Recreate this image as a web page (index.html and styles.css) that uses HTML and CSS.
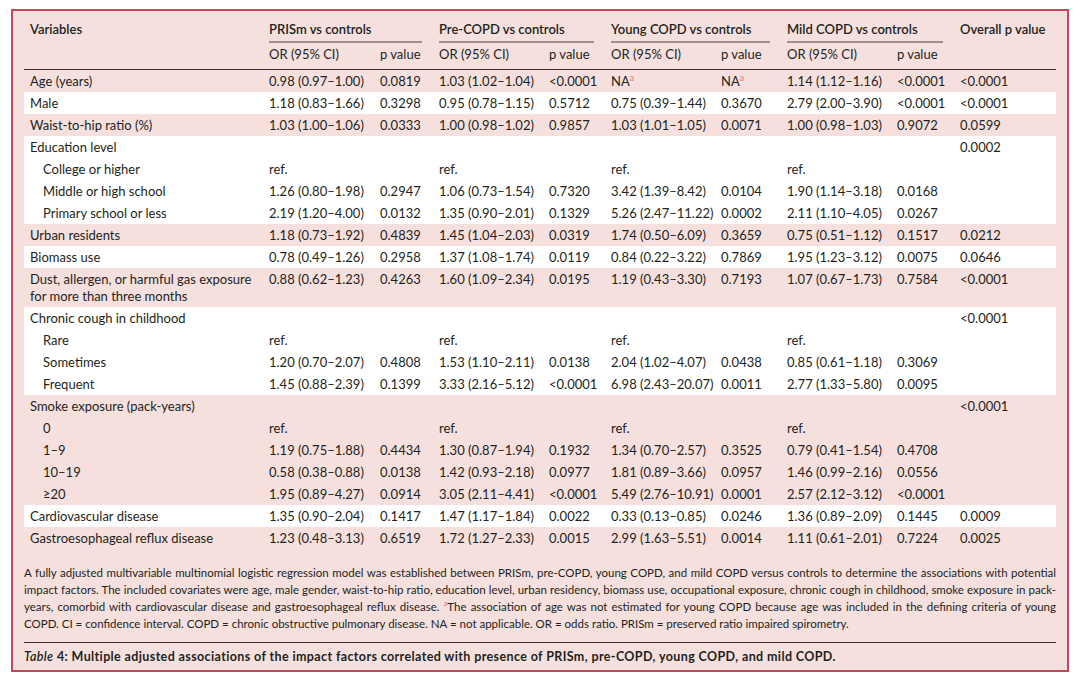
FILE: index.html
```html
<!DOCTYPE html>
<html>
<head>
<meta charset="utf-8">
<link rel="stylesheet" href="styles.css">
</head>
<body>
<div class="frame">
  <table class="tbl">
    <colgroup>
      <col class="c-var"><col class="c-or1"><col class="c-p1"><col class="c-or2"><col class="c-p2"><col class="c-or3"><col class="c-p3"><col class="c-or4"><col class="c-p4"><col class="c-all">
    </colgroup>
    <thead>
      <tr class="h1">
        <th rowspan="2" class="top">Variables</th>
        <th colspan="2" class="grp"><span>PRISm vs controls</span></th>
        <th colspan="2" class="grp"><span>Pre-COPD vs controls</span></th>
        <th colspan="2" class="grp"><span>Young COPD vs controls</span></th>
        <th colspan="2" class="grp"><span>Mild COPD vs controls</span></th>
        <th rowspan="2" class="top">Overall p value</th>
      </tr>
      <tr class="h2">
        <th>OR (95% CI)</th><th>p value</th>
        <th>OR (95% CI)</th><th>p value</th>
        <th>OR (95% CI)</th><th>p value</th>
        <th>OR (95% CI)</th><th>p value</th>
      </tr>
    </thead>
    <tbody>
      <tr><td>Age (years)</td><td>0.98 (0.97–1.00)</td><td>0.0819</td><td>1.03 (1.02–1.04)</td><td>&lt;0.0001</td><td>NA<sup>a</sup></td><td>NA<sup>a</sup></td><td>1.14 (1.12–1.16)</td><td>&lt;0.0001</td><td>&lt;0.0001</td></tr>
      <tr class="w"><td>Male</td><td>1.18 (0.83–1.66)</td><td>0.3298</td><td>0.95 (0.78–1.15)</td><td>0.5712</td><td>0.75 (0.39–1.44)</td><td>0.3670</td><td>2.79 (2.00–3.90)</td><td>&lt;0.0001</td><td>&lt;0.0001</td></tr>
      <tr><td>Waist-to-hip ratio (%)</td><td>1.03 (1.00–1.06)</td><td>0.0333</td><td>1.00 (0.98–1.02)</td><td>0.9857</td><td>1.03 (1.01–1.05)</td><td>0.0071</td><td>1.00 (0.98–1.03)</td><td>0.9072</td><td>0.0599</td></tr>
      <tr class="w"><td>Education level</td><td></td><td></td><td></td><td></td><td></td><td></td><td></td><td></td><td>0.0002</td></tr>
      <tr class="w"><td class="sub">College or higher</td><td>ref.</td><td></td><td>ref.</td><td></td><td>ref.</td><td></td><td>ref.</td><td></td><td></td></tr>
      <tr class="w"><td class="sub">Middle or high school</td><td>1.26 (0.80–1.98)</td><td>0.2947</td><td>1.06 (0.73–1.54)</td><td>0.7320</td><td>3.42 (1.39–8.42)</td><td>0.0104</td><td>1.90 (1.14–3.18)</td><td>0.0168</td><td></td></tr>
      <tr class="w"><td class="sub">Primary school or less</td><td>2.19 (1.20–4.00)</td><td>0.0132</td><td>1.35 (0.90–2.01)</td><td>0.1329</td><td>5.26 (2.47–11.22)</td><td>0.0002</td><td>2.11 (1.10–4.05)</td><td>0.0267</td><td></td></tr>
      <tr><td>Urban residents</td><td>1.18 (0.73–1.92)</td><td>0.4839</td><td>1.45 (1.04–2.03)</td><td>0.0319</td><td>1.74 (0.50–6.09)</td><td>0.3659</td><td>0.75 (0.51–1.12)</td><td>0.1517</td><td>0.0212</td></tr>
      <tr class="w"><td>Biomass use</td><td>0.78 (0.49–1.26)</td><td>0.2958</td><td>1.37 (1.08–1.74)</td><td>0.0119</td><td>0.84 (0.22–3.22)</td><td>0.7869</td><td>1.95 (1.23–3.12)</td><td>0.0075</td><td>0.0646</td></tr>
      <tr><td>Dust, allergen, or harmful gas exposure<br>for more than three months</td><td>0.88 (0.62–1.23)</td><td>0.4263</td><td>1.60 (1.09–2.34)</td><td>0.0195</td><td>1.19 (0.43–3.30)</td><td>0.7193</td><td>1.07 (0.67–1.73)</td><td>0.7584</td><td>&lt;0.0001</td></tr>
      <tr class="w"><td>Chronic cough in childhood</td><td></td><td></td><td></td><td></td><td></td><td></td><td></td><td></td><td>&lt;0.0001</td></tr>
      <tr class="w"><td class="sub">Rare</td><td>ref.</td><td></td><td>ref.</td><td></td><td>ref.</td><td></td><td>ref.</td><td></td><td></td></tr>
      <tr class="w"><td class="sub">Sometimes</td><td>1.20 (0.70–2.07)</td><td>0.4808</td><td>1.53 (1.10–2.11)</td><td>0.0138</td><td>2.04 (1.02–4.07)</td><td>0.0438</td><td>0.85 (0.61–1.18)</td><td>0.3069</td><td></td></tr>
      <tr class="w"><td class="sub">Frequent</td><td>1.45 (0.88–2.39)</td><td>0.1399</td><td>3.33 (2.16–5.12)</td><td>&lt;0.0001</td><td>6.98 (2.43–20.07)</td><td>0.0011</td><td>2.77 (1.33–5.80)</td><td>0.0095</td><td></td></tr>
      <tr><td>Smoke exposure (pack-years)</td><td></td><td></td><td></td><td></td><td></td><td></td><td></td><td></td><td>&lt;0.0001</td></tr>
      <tr><td class="sub">0</td><td>ref.</td><td></td><td>ref.</td><td></td><td>ref.</td><td></td><td>ref.</td><td></td><td></td></tr>
      <tr><td class="sub">1–9</td><td>1.19 (0.75–1.88)</td><td>0.4434</td><td>1.30 (0.87–1.94)</td><td>0.1932</td><td>1.34 (0.70–2.57)</td><td>0.3525</td><td>0.79 (0.41–1.54)</td><td>0.4708</td><td></td></tr>
      <tr><td class="sub">10–19</td><td>0.58 (0.38–0.88)</td><td>0.0138</td><td>1.42 (0.93–2.18)</td><td>0.0977</td><td>1.81 (0.89–3.66)</td><td>0.0957</td><td>1.46 (0.99–2.16)</td><td>0.0556</td><td></td></tr>
      <tr><td class="sub">≥20</td><td>1.95 (0.89–4.27)</td><td>0.0914</td><td>3.05 (2.11–4.41)</td><td>&lt;0.0001</td><td>5.49 (2.76–10.91)</td><td>0.0001</td><td>2.57 (2.12–3.12)</td><td>&lt;0.0001</td><td></td></tr>
      <tr class="w"><td>Cardiovascular disease</td><td>1.35 (0.90–2.04)</td><td>0.1417</td><td>1.47 (1.17–1.84)</td><td>0.0022</td><td>0.33 (0.13–0.85)</td><td>0.0246</td><td>1.36 (0.89–2.09)</td><td>0.1445</td><td>0.0009</td></tr>
      <tr><td>Gastroesophageal reflux disease</td><td>1.23 (0.48–3.13)</td><td>0.6519</td><td>1.72 (1.27–2.33)</td><td>0.0015</td><td>2.99 (1.63–5.51)</td><td>0.0014</td><td>1.11 (0.61–2.01)</td><td>0.7224</td><td>0.0025</td></tr>
    </tbody>
  </table>
  <p class="note"><span class="ln">A fully adjusted multivariable multinomial logistic regression model was established between PRISm, pre-COPD, young COPD, and mild COPD versus controls to determine the associations with potential</span><span class="ln">impact factors. The included covariates were age, male gender, waist-to-hip ratio, education level, urban residency, biomass use, occupational exposure, chronic cough in childhood, smoke exposure in pack-</span><span class="ln">years, comorbid with cardiovascular disease and gastroesophageal reflux disease. <sup>a</sup>The association of age was not estimated for young COPD because age was included in the defining criteria of young</span><span class="ln last">COPD. CI = confidence interval. COPD = chronic obstructive pulmonary disease. NA = not applicable. OR = odds ratio. PRISm = preserved ratio impaired spirometry.</span></p>
  <p class="caption"><i>Table</i> 4: Multiple adjusted associations of the impact factors correlated with presence of PRISm, pre-COPD, young COPD, and mild COPD.</p>
</div>
</body>
</html>
```

FILE: styles.css
```css
html, body {
  margin: 0;
  padding: 0;
  background: #ffffff;
}
body {
  font-family: Lato, "Open Sans", sans-serif;
  color: #231f20;
}
.frame {
  box-sizing: border-box;
  width: 1058px;
  margin: 9px 0 0 11px;
  border: 2px solid #c9465f;
  background: #f5e0de;
  padding: 0 11px 5px 11px;
}
.tbl {
  width: 1032px;
  table-layout: fixed;
  border-collapse: separate;
  border-spacing: 0;
  font-size: 13px;
}
.c-var { width: 239px; }
.c-or1 { width: 111px; }
.c-p1 { width: 59px; }
.c-or2 { width: 110px; }
.c-p2 { width: 62px; }
.c-or3 { width: 110px; }
.c-p3 { width: 66px; }
.c-or4 { width: 110px; }
.c-p4 { width: 63px; }
.c-all { width: 102px; }

.tbl th {
  text-align: left;
  font-weight: 600;
  vertical-align: top;
  line-height: 17px;
  white-space: nowrap;
}
.tbl th.top {
  padding: 10px 6px 5.5px 6px;
  border-bottom: 1.5px solid #3a3334;
}
.tbl th.grp {
  padding: 10px 11px 0 6px;
}
.tbl th.grp span {
  display: block;
  padding-bottom: 3px;
  border-bottom: 2px solid #9d8f90;
}
.tbl .h2 th {
  font-weight: 400;
  padding: 3px 6px 5.5px 6px;
  border-bottom: 1.5px solid #3a3334;
}
.tbl td {
  padding: 3px 6px 2px 6px;
  line-height: 17px;
  vertical-align: top;
  white-space: nowrap;
}
.tbl td.sub {
  padding-left: 19px;
}
.tbl tr.w td {
  background: #ffffff;
}
sup {
  font-size: 8.5px;
  line-height: 0;
  vertical-align: 5px;
  color: #d27c74;
}
.note {
  margin: 15.5px 0 0 0;
  font-size: 11.5px;
  line-height: 17px;
}
.note .ln {
  display: block;
  white-space: nowrap;
  text-align: justify;
  text-align-last: justify;
}
.note .ln.last {
  text-align: left;
  text-align-last: left;
}
.note sup {
  color: #d27c74;
  font-size: 7.5px;
}
.caption {
  margin: 10px 0 0 0;
  padding-top: 5px;
  border-top: 1.5px solid #3a3334;
  font-size: 12.5px;
  line-height: 17px;
  font-weight: 700;
  letter-spacing: 0.38px;
}
.caption i {
  font-weight: 600;
}
```
